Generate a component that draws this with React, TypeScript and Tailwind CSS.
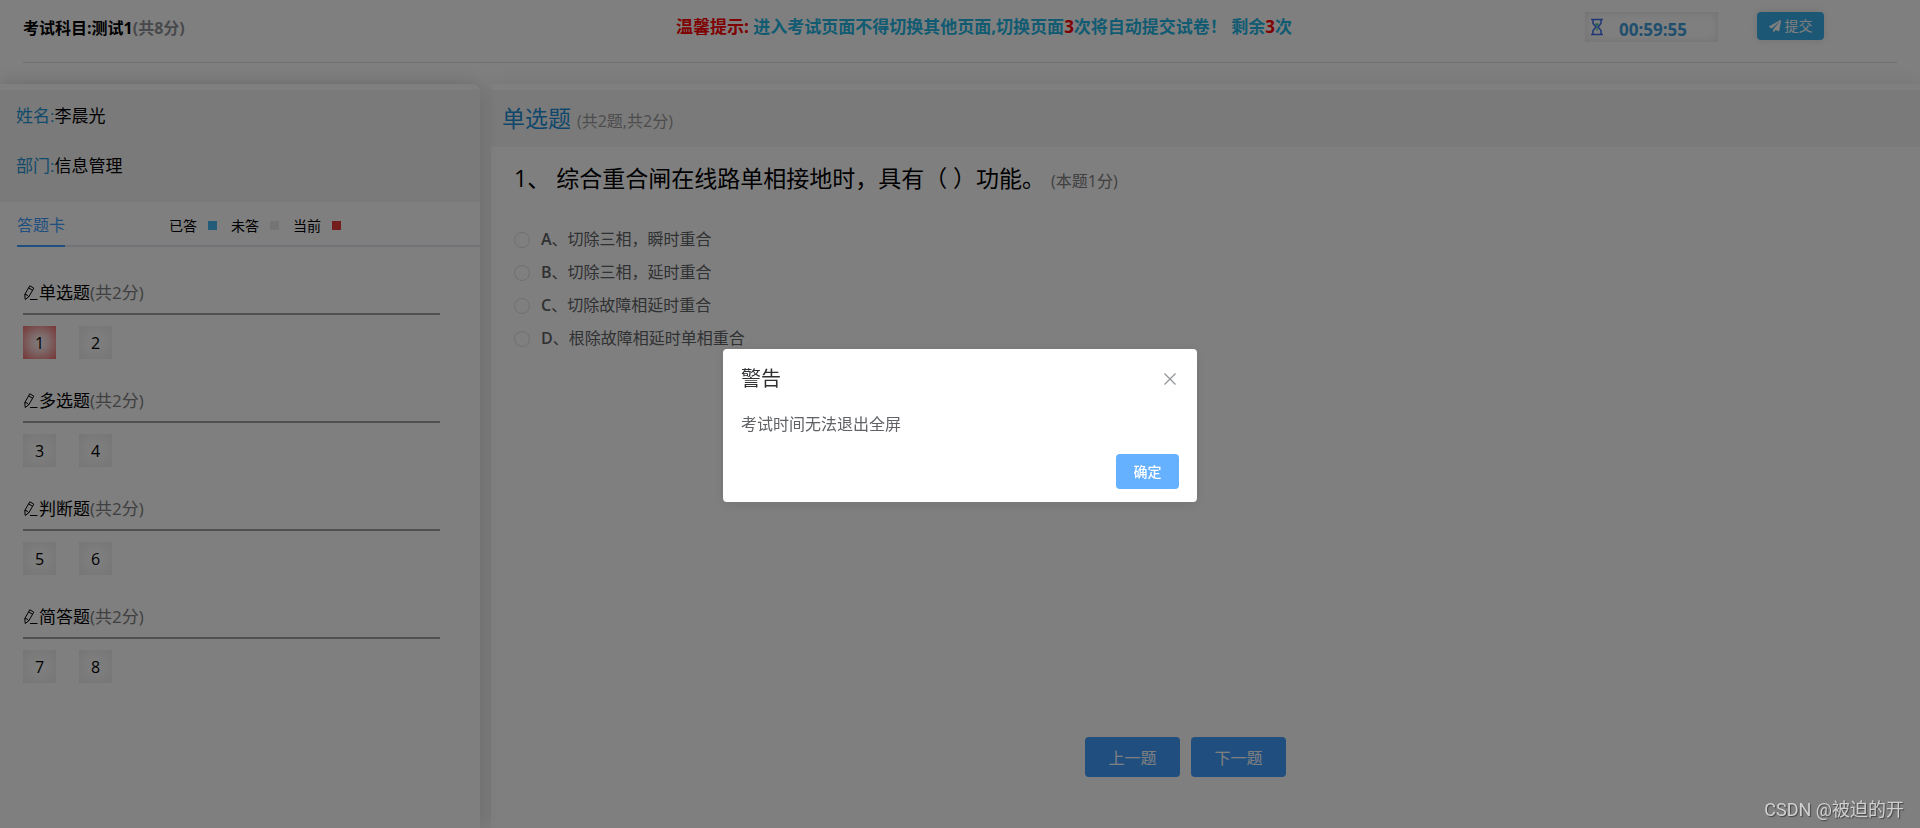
import React, { useState } from 'react';
import { FaPaperPlane } from 'react-icons/fa';

interface Section {
  title: string;
  numbers: number[];
}

const sections: Section[] = [
  { title: '单选题', numbers: [1, 2] },
  { title: '多选题', numbers: [3, 4] },
  { title: '判断题', numbers: [5, 6] },
  { title: '简答题', numbers: [7, 8] },
];

const options = [
  { key: 'A', text: '切除三相，瞬时重合' },
  { key: 'B', text: '切除三相，延时重合' },
  { key: 'C', text: '切除故障相延时重合' },
  { key: 'D', text: '根除故障相延时单相重合' },
];

const PencilIcon = () => (
  <svg viewBox="0 0 16 16" className="h-4 w-4" fill="none" stroke="currentColor" strokeWidth="1" strokeLinejoin="round">
    <path d="M1.800 9.500 6.800.800l4 2.300-5 8.700-3.600 2.700z" />
    <path d="M5.600 2.900l4 2.300M1.800 9.500c1.700.1 3.200.9 4 2.300M7 14.500h7.500" />
  </svg>
);

const HourglassIcon = () => (
  <svg viewBox="0 0 12 18" className="h-[18px] w-3" fill="none" stroke="#3f6fe8" strokeWidth="1.5">
    <path d="M0 1.500h12M0 16.500h12" />
    <path d="M2 2v3.500L5 9 2 12.500V16M10 2v3.500L7 9l3 3.500V16" />
    <path d="M3.800 5.500h4.400L6 8.500z" fill="#2fc29a" stroke="none" />
    <path d="M6 9v4" stroke="#2fc29a" strokeWidth="1" />
  </svg>
);

const Header = () => (
  <header className="mx-[23px] flex h-[63px] items-start border-b border-[#dcdfe6] text-base font-bold">
    <h1 className="mt-4 w-[653px] leading-6">
      考试科目:测试1<span className="text-[#909399]">(共8分)</span>
    </h1>
    <p className="mt-4 flex-1 text-[17px] leading-[22px] text-[#23b7e5]">
      <span className="text-[#f00]">温馨提示:</span> 进入考试页面不得切换其他页面,切换页面<span className="text-[#f00]">3</span>次将自动提交试卷！ 剩余
      <span className="text-[#f00]">3</span>次
    </p>
    <div className="mt-3 mr-[39px] flex h-[30px] w-[133px] items-center gap-4 pl-1.5 text-[#409edc] shadow-[inset_0_0_10px_rgba(0,0,0,0.12)]">
      <HourglassIcon />
      <time className="pt-1.5 text-[17px] leading-6">00:59:55</time>
    </div>
    <button className="mt-3 mr-[73px] flex h-7 w-[67px] items-center justify-center gap-1 rounded bg-[#38b0ea] text-sm font-normal text-white shadow-[0_0_10px_rgba(0,0,0,0.12)]">
      <FaPaperPlane className="h-3 w-3" />
      提交
    </button>
  </header>
);

const Legend = ({ label, color }: { label: string; color: string }) => (
  <span className="flex items-center gap-[11px] text-sm">
    {label}
    <i className={`h-[9px] w-[9px] ${color}`} />
  </span>
);

const Sidebar = ({ current, onSelect }: { current: number; onSelect: (n: number) => void }) => (
  <aside className="z-10 w-1/4 rounded-tr-lg bg-white pt-1.5 shadow-[0_0_20px_rgba(0,0,0,0.18)]">
    <div className="h-28 bg-[#f5f5f5] px-4 pt-3.5 text-[17px]">
      <p className="mb-[26px] leading-6">
        <span className="text-[#2796d4]">姓名:</span>李晨光
      </p>
      <p className="leading-6">
        <span className="text-[#2796d4]">部门:</span>信息管理
      </p>
    </div>
    <div className="ml-[17px] flex h-[45px] items-stretch border-b-2 border-[#e4e7ed]">
      <h2 className="-mb-0.5 w-[48px] border-b-2 border-[#409eff] text-base leading-[46px] text-[#409eff]">答题卡</h2>
      <div className="ml-[104px] flex items-center gap-3.5 pt-1">
        <Legend label="已答" color="bg-[#48b6f0]" />
        <Legend label="未答" color="bg-[#e8e8e8]" />
        <Legend label="当前" color="bg-[#e83a3a]" />
      </div>
    </div>
    <div className="mt-[34px] ml-[23px] mr-10 flex flex-col gap-[30px]">
      {sections.map((section) => (
        <section key={section.title}>
          <h3 className="flex h-[34px] items-start border-b-2 border-[#a0a0a0] text-[17px] leading-6">
            <span className="mt-1">
              <PencilIcon />
            </span>
            {section.title}
            <span className="text-[#808080]">(共2分)</span>
          </h3>
          <div className="mt-[11px] flex gap-[23px]">
            {section.numbers.map((n) => (
              <button
                key={n}
                onClick={() => onSelect(n)}
                className={`h-[33px] w-[33px] text-base ${
                  n === current ? 'shadow-[inset_0_0_18px_#e83a3a]' : 'shadow-[inset_0_0_18px_rgba(0,0,0,0.1)]'
                }`}
              >
                {n}
              </button>
            ))}
          </div>
        </section>
      ))}
    </div>
  </aside>
);

const Question = () => (
  <main className="ml-[11px] flex flex-1 flex-col bg-white pt-1.5 shadow-[0_0_20px_rgba(0,0,0,0.1)]">
    <h2 className="h-[57px] bg-[#f5f5f5] px-[11px] text-[23px] leading-[56px] text-[#1c8fd6]">
      单选题 <span className="text-base text-[#999]">(共2题,共2分)</span>
    </h2>
    <div className="px-[23px] pt-4">
      <p className="text-[23px] leading-[30px]">
        1、 综合重合闸在线路单相接地时，具有（ ）功能。 <span className="text-base text-[#808080]">(本题1分)</span>
      </p>
      <fieldset className="mt-[30px] text-base leading-[33px] font-medium text-[#606266]">
        {options.map((option) => (
          <label key={option.key} className="flex h-[33px] items-center">
            <input
              type="radio"
              name="answer"
              value={option.key}
              className="mr-[11px] h-4 w-4 appearance-none rounded-full border border-[#dcdfe6] bg-white checked:border-[5px] checked:border-[#409eff]"
            />
            <span className="font-semibold">{option.key}</span>
            <span className="font-normal">、{option.text}</span>
          </label>
        ))}
      </fieldset>
    </div>
    <div className="mt-auto mb-[51px] flex justify-center gap-[11px] pr-10 text-base text-white">
      <button className="h-10 w-[95px] rounded bg-[#409eff] pt-0.5">上一题</button>
      <button className="h-10 w-[95px] rounded bg-[#409eff] pt-0.5">下一题</button>
    </div>
  </main>
);

const WarningDialog = ({ onClose }: { onClose: () => void }) => (
  <div className="fixed inset-0 z-20 flex items-center justify-center bg-black/50">
    <div
      role="dialog"
      aria-labelledby="warning-title"
      className="mt-[22px] w-[474px] rounded bg-white px-[18px] pt-[17px] pb-[13px] shadow-[0_2px_12px_rgba(0,0,0,0.1)]"
    >
      <div className="flex items-center justify-between">
        <h2 id="warning-title" className="text-xl leading-[26px] text-[#303133]">
          警告
        </h2>
        <button aria-label="关闭" onClick={onClose} className="p-[3px] text-[#909399]">
          <svg viewBox="0 0 12 12" className="h-3 w-3" stroke="currentColor" strokeWidth="1.2">
            <path d="M.5.5l11 11M11.500.5l-11 11" />
          </svg>
        </button>
      </div>
      <p className="mt-5 text-base leading-6 text-[#606266]">考试时间无法退出全屏</p>
      <div className="mt-[18px] flex justify-end">
        <button onClick={onClose} className="h-[35px] w-[63px] rounded bg-[#66b1ff] pt-0.5 text-sm font-medium text-white">
          确定
        </button>
      </div>
    </div>
  </div>
);

const App: React.FC = () => {
  const [current, setCurrent] = useState(1);
  const [warning, setWarning] = useState(true);

  return (
    <div className="flex min-h-screen flex-col overflow-hidden bg-white font-['Open_Sans','Noto_Sans_CJK_SC',sans-serif] text-black">
      <Header />
      <div className="mt-[21px] flex flex-1 items-stretch">
        <Sidebar current={current} onSelect={setCurrent} />
        <Question />
      </div>
      {warning && <WarningDialog onClose={() => setWarning(false)} />}
      <span className="fixed right-4 bottom-1.5 z-30 font-[Roboto,'Noto_Sans_CJK_SC',sans-serif] text-lg leading-6 text-[#d0d0d0] [text-shadow:1px_1px_1px_#444]">
        CSDN @被迫的开
      </span>
    </div>
  );
};

export default App;
